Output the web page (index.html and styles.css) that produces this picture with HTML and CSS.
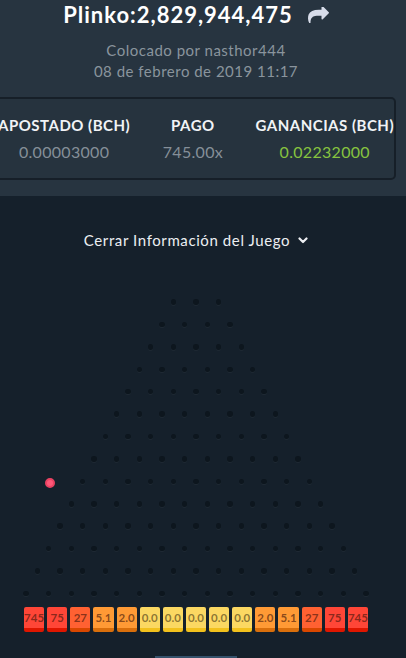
FILE: index.html
```html
<!DOCTYPE html>
<html lang="es">
<head>
    <meta charset="UTF-8">
    <meta name="viewport" content="width=device-width, initial-scale=1.0">
    <title>Plinko</title>
    <link rel="stylesheet" href="styles.css">
</head>
<body>
    <header class="bet-info">
        <div class="title-row">
            <h1>Plinko:2,829,944,475</h1>
            <svg class="share-icon" viewBox="0 160 1792 1344" width="21" height="16">
                <path d="M1792 640q0 26-19 45l-512 512q-19 19-45 19t-45-19-19-45v-256h-224q-98 0-175.5 6t-154 21.5-133 42.5-105.5 69.5-80 101-48.5 138.5-17.5 181q0 55 5 123 0 6 2.5 23.5t2.5 26.5q0 15-8.5 25t-23.5 10q-16 0-28-17-7-9-13-22t-13.5-30-10.5-24q-127-285-127-451 0-199 53-333 162-403 875-403h224v-256q0-26 19-45t45-19 45 19l512 512q19 19 19 45z" fill="currentColor"/>
            </svg>
        </div>
        <p class="meta">Colocado por nasthor444<br>08 de febrero de 2019 11:17</p>

        <div class="stats">
            <div class="stat">
                <span class="label">APOSTADO (BCH)</span>
                <span class="value">0.00003000</span>
            </div>
            <div class="stat">
                <span class="label">PAGO</span>
                <span class="value">745.00x</span>
            </div>
            <div class="stat">
                <span class="label">GANANCIAS (BCH)</span>
                <span class="value win">0.02232000</span>
            </div>
        </div>
    </header>

    <section class="board">
        <button class="toggle">Cerrar Información del Juego
            <svg viewBox="0 0 10 7" width="10" height="7"><polyline points="1.5,1.5 5,5 8.5,1.5" fill="none" stroke="currentColor" stroke-width="2.2" stroke-linecap="round" stroke-linejoin="round"/></svg>
        </button>

        <div class="pegs" id="pegs">
            <!-- filas generadas abajo -->
        </div>
        <span class="ball"></span>

        <div class="buckets">
            <span class="bucket red">745</span>
            <span class="bucket red">75</span>
            <span class="bucket coral">27</span>
            <span class="bucket orange">5.1</span>
            <span class="bucket orange">2.0</span>
            <span class="bucket yellow">0.0</span>
            <span class="bucket yellow">0.0</span>
            <span class="bucket yellow">0.0</span>
            <span class="bucket yellow">0.0</span>
            <span class="bucket yellow">0.0</span>
            <span class="bucket orange">2.0</span>
            <span class="bucket orange">5.1</span>
            <span class="bucket coral">27</span>
            <span class="bucket red">75</span>
            <span class="bucket red">745</span>
        </div>

        <div class="scroll-bar"></div>
    </section>

    <script>
        // 14 filas: la primera con 3 clavos, la última con 16
        const pegs = document.getElementById("pegs");
        for (let row = 1; row <= 14; row++) {
            const line = document.createElement("div");
            line.className = "peg-row";
            for (let i = 0; i < row + 2; i++) {
                const peg = document.createElement("span");
                peg.className = "peg";
                line.appendChild(peg);
            }
            pegs.appendChild(line);
        }
    </script>
</body>
</html>
```

FILE: styles.css
```css
body {
    margin: 0;
    font-family: Lato, "Noto Sans", sans-serif;
    background-color: #15202b;
    overflow: hidden;
}

.bet-info {
    background-color: #273440;
    padding: 0 14px 16px 0;
    display: flex;
    flex-direction: column;
    align-items: center;
}

.title-row {
    display: flex;
    align-items: center;
    height: 30px;
}

.title-row h1 {
    margin: 0;
    font-size: 22px;
    font-weight: 700;
    letter-spacing: 1px;
    color: #ffffff;
    line-height: 30px;
}

.share-icon {
    color: #d7dce9;
    margin-left: 15px;
}

.meta {
    margin: 9.5px 0 0;
    font-size: 15px;
    line-height: 21px;
    letter-spacing: 0.5px;
    color: #8a949d;
    text-align: center;
}

.stats {
    margin-top: 15.5px;
    width: 396px;
    margin-left: -4px;
    margin-right: -4px;
    border: 2px solid #161f28;
    border-radius: 5px;
    background-color: #26333e;
    padding: 17px 0 16px;
    display: grid;
    grid-template-columns: repeat(3, 1fr);
}

.stat {
    display: flex;
    flex-direction: column;
    align-items: center;
    white-space: nowrap;
}

.stat .label {
    font-size: 15px;
    font-weight: 700;
    line-height: 18px;
    letter-spacing: 0.5px;
    color: #f1f3f6;
}

.stat .value {
    margin-top: 8px;
    font-size: 16px;
    line-height: 20px;
    letter-spacing: 0.3px;
    color: #858f98;
}

.stat .value.win {
    color: #86c33f;
}

.board {
    position: relative;
    padding: 34px 14px 0 0;
    display: flex;
    flex-direction: column;
    align-items: center;
}

.toggle {
    background: none;
    border: 0;
    padding: 0;
    font-family: inherit;
    font-size: 15px;
    line-height: 20px;
    letter-spacing: 0.6px;
    color: #eceef2;
    display: flex;
    align-items: center;
    gap: 8px;
}

.pegs {
    margin-top: 40.8px;
    display: flex;
    flex-direction: column;
}

.peg-row {
    height: 22.43px;
    display: flex;
    align-items: center;
    justify-content: center;
    gap: 17.17px;
}

.peg {
    width: 5.5px;
    height: 5.5px;
    border-radius: 50%;
    background-color: #0d161e;
    box-shadow: 0 1px 0 rgba(255, 255, 255, 0.04);
}

.ball {
    position: absolute;
    left: 44.5px;
    top: 281.5px;
    width: 10px;
    height: 10px;
    box-sizing: border-box;
    border-radius: 50%;
    background-color: #ff5878;
    border: 2px solid #ea4262;
}

.buckets {
    margin-top: 2px;
    width: 344px;
    display: grid;
    grid-template-columns: repeat(15, 1fr);
    column-gap: 3px;
}

.bucket {
    height: 21px;
    line-height: 21px;
    border-radius: 2px;
    border-bottom: 4px solid;
    text-align: center;
    font-size: 11.5px;
    font-weight: 700;
    color: rgba(60, 20, 10, 0.62);
    white-space: nowrap;
    display: flex;
    justify-content: center;
}

.bucket.red {
    background-color: #ff4637;
    border-color: #df1600;
}

.bucket.coral {
    background-color: #ff6132;
    border-color: #d94700;
}

.bucket.orange {
    background-color: #ff9a35;
    border-color: #d96f0c;
}

.bucket.yellow {
    background-color: #fbd862;
    border-color: #f2c11d;
    color: rgba(70, 55, 20, 0.62);
}

.scroll-bar {
    margin-top: 24px;
    width: 82px;
    height: 6px;
    background-color: #35516b;
}
```
